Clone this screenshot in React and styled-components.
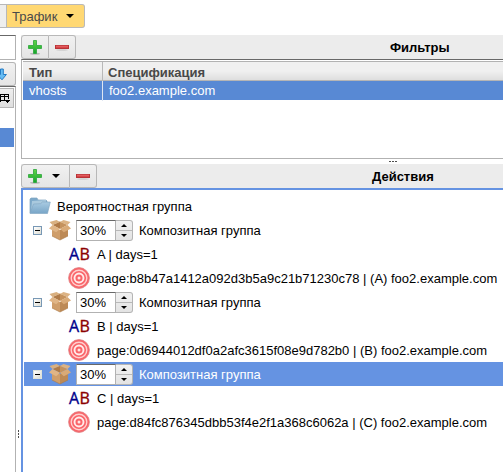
import React from "react";
import styled, { createGlobalStyle } from "styled-components";

const Global = createGlobalStyle`
  * { box-sizing: border-box; }
  body { margin: 0; background: #fff; overflow: hidden; }
  svg { display: block; flex: none; }
`;
const Page = styled.div`
  width: 503px; height: 472px; overflow: hidden;
  display: flex; flex-direction: column;
  font: 13px "Liberation Sans", Arial, sans-serif; color: #111; white-space: nowrap;
`;
const TabBar = styled.div`
  display: flex; height: 35px; padding-top: 4px;
`;
const TabStub = styled.div`
  width: 7px; height: 24px; background: #eee;
  border: 1px solid #b8b8b8; border-width: 1px 1px 1px 0;
`;
const Tab = styled.button`
  display: flex; align-items: center; gap: 9px;
  width: 78px; height: 24px; padding: 0 0 0 5px;
  font: inherit; color: #4a4a4a; background: #ffd873;
  border: 1px solid #b9b9b9; border-left: 0; border-radius: 0 3px 3px 0;
`;
const Columns = styled.div`
  display: flex; height: 437px;
`;
const Side = styled.div`
  width: 16px; display: flex; flex-direction: column;
`;
const Field = styled.div`
  height: 25px; border: 1px solid #b2b2b2; border-width: 1px 1px 1px 0; border-top-color: #686868;
`;
const SortButton = styled.div`
  height: 24px; margin-top: 2px; padding-top: 5px; overflow: hidden;
  background: linear-gradient(#f1f1f1, #e5e5e5);
  border: 1px solid #b5b5b5; border-left: 0; border-radius: 0 3px 3px 0;
`;
const SideTable = styled.div`
  flex: 1; padding: 1px 1px 0 0; border: 1px solid #b2b2b2; border-width: 1px 1px 0 0; border-top-color: #686868;
`;
const ColumnPicker = styled.div`
  height: 20px; width: 14px; padding-top: 5px; background: linear-gradient(#efefef, #dedede);
  border: 1px solid #b5b5b5; border-left: 0;
`;
const SideSelection = styled.div`
  width: 14px; height: 19px; margin-top: 20px; background: #5889d4;
`;
const Splitter = styled.div`
  width: 5px; display: flex; flex-direction: column; align-items: center; padding: 395px 0 0 0; gap: 1px;
`;
const Main = styled.div`
  flex: 1; min-width: 0; display: flex; flex-direction: column;
`;
const Toolbar = styled.div`
  display: flex; height: 24px; background: #ececec; flex: none;
`;
const ToolButton = styled.button`
  display: flex; align-items: center; gap: 9px; height: 24px; width: ${p => p.$w}px;
  padding: 0 0 0 5px; background: linear-gradient(#f1f1f1, #e5e5e5);
  border: 1px solid #b8b8b8; border-left-width: ${p => p.$first ? 1 : 0}px;
  border-radius: ${p => p.$first ? "3px 0 0 3px" : "0 3px 3px 0"};
`;
const Title = styled.div`
  margin-left: ${p => p.$gap}px; line-height: 25px; font-weight: bold; color: #000;
`;
const FilterTable = styled.div`
  height: 100px; border: 1px solid #b2b2b2; border-top-color: #686868; border-right: 0;
  padding: 1px 0 0 1px;
`;
const TableRow = styled.div`
  display: grid; grid-template-columns: 80px 1fr; height: ${p => p.$head ? 20 : 19}px;
  color: ${p => p.$head ? "#484848" : "#fff"}; font-weight: ${p => p.$head ? "bold" : "normal"};
  background: ${p => p.$head ? "linear-gradient(#f0f0f0 50%, #dedede)" : "#5889d4"};
  border-top: ${p => p.$head ? "1px solid #b2b2b2" : "0"};
  border-bottom: ${p => p.$head ? "1px solid #b5b5b5" : "0"};
`;
const Cell = styled.div`
  padding-left: ${p => p.$head && !p.$first ? 5 : 6}px;
  border-right: ${p => p.$first ? `1px solid ${p.$head ? "#b8b8b8" : "#dfe6f2"}` : "0"};
  line-height: ${p => p.$head ? 21 : 20}px;
`;
const Grip = styled.div`
  display: flex; justify-content: flex-start; gap: 1px; height: 5px; padding: 2px 0 0 368px; flex: none;
`;
const Dot = styled.i`
  background: #505050; width: ${p => p.$v ? 1 : 2}px; height: ${p => p.$v ? 2 : 1}px;
`;
const Tree = styled.div`
  flex: 1; border: 2px solid #6593e2; border-width: 2px 0 0 2px; padding: 4px 0 0 1px; color: #000;
`;
const Node = styled.div`
  display: flex; align-items: center; height: 24px;
  background: ${p => p.$selected ? "#6593e2" : "transparent"};
  color: ${p => p.$selected ? "#fff" : "inherit"};
  padding-left: ${p => p.$indent}px;
`;
const Label = styled.span`
  margin-left: ${p => p.$gap}px; line-height: 24px; padding-top: 2px;
`;
const Toggle = styled.span`
  width: 9px; height: 9px; margin-right: 6px; display: flex; align-items: center; justify-content: center;
  border: 1px solid ${p => p.$selected ? "#dfe3da" : "#7898b5"}; background: linear-gradient(135deg, #fff, #dddcd3);
  &::after { content: ""; width: 5px; height: 1px; background: #000; }
`;
const Spinner = styled.div`
  display: flex; width: 57px; height: 21px; margin: 1px 0 0 4px; color: #000;
`;
const SpinValue = styled.div`
  width: 40px; background: #fff; border: 1px solid #b2b2b2; border-top-color: #686868;
  padding-left: 3px; line-height: 19px;
`;
const SpinButtons = styled.div`
  width: 17px; display: grid; grid-template-rows: 10px 9px; border: 1px solid #b5b5b5; border-left: 0; border-radius: 0 3px 3px 0;
  background: linear-gradient(#f1f1f1, #e3e3e3); overflow: hidden;
`;
const SpinButton = styled.div`
  display: flex; justify-content: center; padding-top: 3px;
  border-bottom: ${p => p.$up ? "1px solid #b8b8b8" : "0"};
`;
const AbMark = styled.span`
  width: 23px; font: 16px/24px "Open Sans", "Noto Sans", sans-serif; color: #00008b;
  -webkit-text-stroke: .35px currentColor; letter-spacing: .4px;
`;
const AbSecond = styled.span`
  color: #8b0000;
`;

const Caret = ({ up, w = 6, h = 3 }) => (
  <svg width={w} height={h} viewBox="0 0 8 4" preserveAspectRatio="none"><path d={up ? "M0 4L4 0 8 4z" : "M0 0h8L4 4z"} fill="#000" /></svg>
);
const Plus = () => (
  <svg width="16" height="18" viewBox="0 0 16 18">
    <defs><linearGradient id="plus" x2="0" y2="1"><stop stopColor="#64d447" /><stop offset="1" stopColor="#13a52a" /></linearGradient></defs>
    <ellipse cx="8" cy="15.7" rx="5" ry="1" fill="#000" opacity=".2" />
    <path d="M6.5 2.5h3v5h5v3h-5v5h-3v-5h-5v-3h5z" fill="url(#plus)" stroke="#2aa63a" strokeWidth=".8" />
  </svg>
);
const Minus = () => (
  <svg width="16" height="16" viewBox="0 0 16 16">
    <ellipse cx="8" cy="11" rx="6" ry=".8" fill="#000" opacity=".13" />
    <rect x="1.5" y="6.5" width="13" height="3" fill="#d64549" stroke="#b83337" />
    <path d="M2 7.2h12" stroke="#ef7777" strokeWidth=".7" />
  </svg>
);
const Folder = () => (
  <svg width="22" height="20" viewBox="0 0 22 20">
    <defs><linearGradient id="folder" x2="0" y2="1"><stop stopColor="#a9cbe2" /><stop offset="1" stopColor="#78a5c7" /></linearGradient></defs>
    <path d="M1 17V3l1-1h6l1 2h8l1 1v3" fill="#7da9ca" stroke="#7fa5c0" strokeWidth=".7" />
    <path d="M2 16L3 5l14-1v5z" fill="#a9c9de" />
    <path d="M1 17.5L4.5 8l7-.3 2-1.7h7.8l-2.8 11.5z" fill="url(#folder)" stroke="#7da3bf" strokeWidth=".6" />
  </svg>
);
const Box = () => (
  <svg width="24" height="22" viewBox="0 0 24 22">
    <path d="M4 7l8 4v10l-8-4z" fill="#cf9e6b" />
    <path d="M12 11l8-4v10l-8 4z" fill="#bd8a56" />
    <path d="M4.5 6L12 2.6V10z" fill="#b07b48" /><path d="M19.5 6L12 2.6V10z" fill="#c5925d" />
    <path d="M4.5 6L1.5 3 8.5 1 12 3z" fill="#d9b080" /><path d="M12 3l3.5-2 7 2-3 3z" fill="#dcb384" />
    <path d="M4.5 6L12 9.8l-3.8 3.5L1 9.5z" fill="#e0b586" /><path d="M19.5 6L12 9.8l3.8 3.5L23 9.5z" fill="#d9aa77" />
    <path d="M4 17l8 4 8-4" fill="none" stroke="#a97745" strokeWidth=".6" />
  </svg>
);
const Target = () => (
  <svg width="22" height="22" viewBox="0 0 22 22">
    <circle cx="11" cy="11" r="10.4" fill="#fa6469" stroke="#df8083" strokeWidth=".8" />
    <circle cx="11" cy="11" r="7.8" fill="none" stroke="#ffd0cf" strokeWidth="1.4" />
    <circle cx="11" cy="11" r="4.5" fill="none" stroke="#ffeceb" strokeWidth="1.9" />
    <circle cx="11" cy="11" r="1.5" fill="#ffe5e3" />
  </svg>
);
const DownArrow = () => (
  <svg width="8" height="13" viewBox="0 0 8 13">
    <path d="M.5 1h2.8v5.5h3.1L2 11.8-3 6.5H.5z" fill="#67bdf4" stroke="#237bc5" />
  </svg>
);
const PickerIcon = () => (
  <svg width="13" height="11" viewBox="0 0 13 11" shapeRendering="crispEdges">
    <path d="M.5 8V.5h8V5M0 2.5h9M4.5 0v7M0 6.5h5" fill="none" stroke="#000" />
    <path d="M5 6h5v1H9v1H8v1H7V8H6V7H5z" fill="#000" />
  </svg>
);

const groups = [
  { name: "A", page: "b8b47a1412a092d3b5a9c21b71230c78" },
  { name: "B", page: "0d6944012df0a2afc3615f08e9d782b0" },
  { name: "C", page: "d84fc876345dbb53f4e2f1a368c6062a", selected: true },
];

const Group = ({ name, page, selected }) => (
  <>
    <Node $indent={9} $selected={selected}>
      <Toggle $selected={selected} />
      <Box />
      <Spinner>
        <SpinValue>30%</SpinValue>
        <SpinButtons>
          <SpinButton $up><Caret up /></SpinButton>
          <SpinButton><Caret /></SpinButton>
        </SpinButtons>
      </Spinner>
      <Label $gap={6}>Композитная группа</Label>
    </Node>
    <Node $indent={45}>
      <AbMark>A<AbSecond>B</AbSecond></AbMark>
      <Label $gap={5}>{name} | days=1</Label>
    </Node>
    <Node $indent={44}>
      <Target />
      <Label $gap={7}>page:{page} | ({name}) foo2.example.com</Label>
    </Node>
  </>
);

export default function App() {
  return (
    <Page>
      <Global />
      <TabBar>
        <TabStub />
        <Tab>Трафик <Caret w={8} h={4} /></Tab>
      </TabBar>
      <Columns>
        <Side>
          <Field />
          <SortButton><DownArrow /></SortButton>
          <SideTable>
            <ColumnPicker><PickerIcon /></ColumnPicker>
            <SideSelection />
          </SideTable>
        </Side>
        <Splitter><Dot $v /><Dot $v /><Dot $v /></Splitter>
        <Main>
          <Toolbar>
            <ToolButton $w={28} $first><Plus /></ToolButton>
            <ToolButton $w={27}><Minus /></ToolButton>
            <Title $gap={314}>Фильтры</Title>
          </Toolbar>
          <FilterTable>
            <TableRow $head><Cell $first $head>Тип</Cell><Cell $head>Спецификация</Cell></TableRow>
            <TableRow><Cell $first>vhosts</Cell><Cell>foo2.example.com</Cell></TableRow>
          </FilterTable>
          <Grip><Dot /><Dot /><Dot /></Grip>
          <Toolbar>
            <ToolButton $w={49} $first><Plus /><Caret w={8} h={4} /></ToolButton>
            <ToolButton $w={27}><Minus /></ToolButton>
            <Title $gap={275}>Действия</Title>
          </Toolbar>
          <Tree>
            <Node $indent={5}><Folder /><Label $gap={6}>Вероятностная группа</Label></Node>
            {groups.map(g => <Group key={g.name} {...g} />)}
          </Tree>
        </Main>
      </Columns>
    </Page>
  );
}
